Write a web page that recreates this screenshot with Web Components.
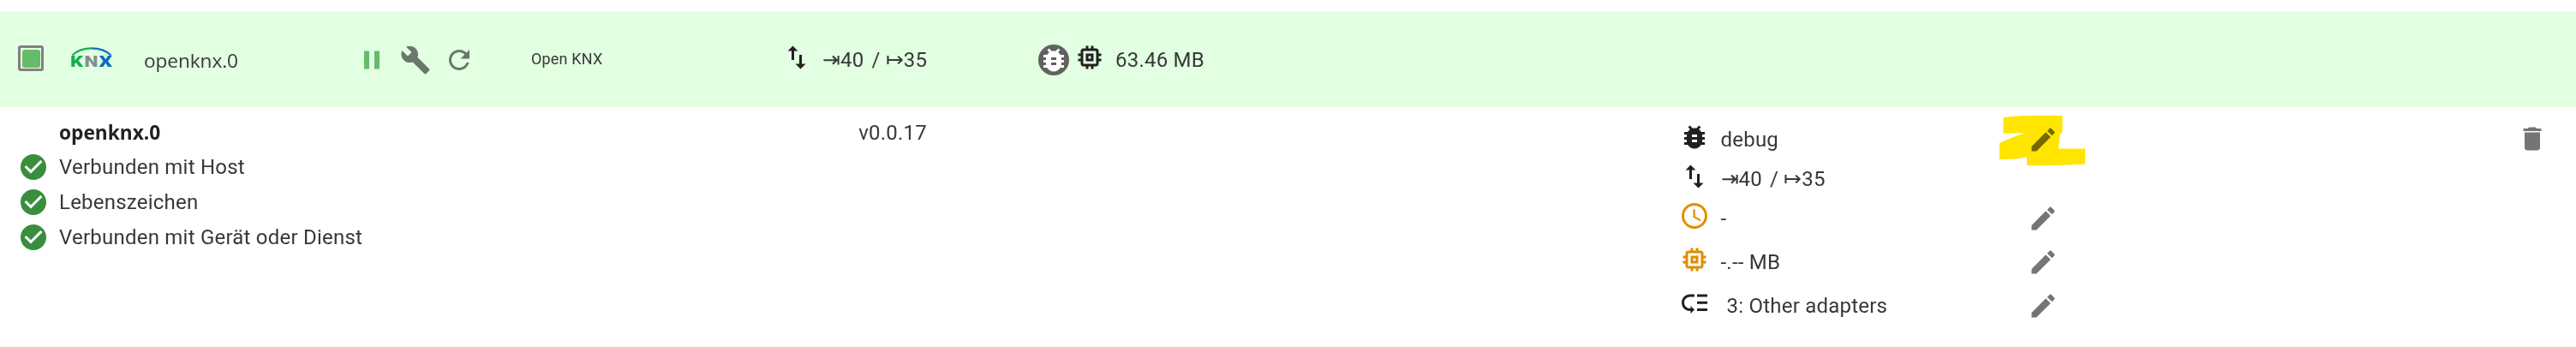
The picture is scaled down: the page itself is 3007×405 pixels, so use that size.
<!DOCTYPE html>
<html lang="de"><head><meta charset="utf-8"><title>openknx.0</title>
<style>html,body{margin:0;background:#fff}</style></head><body>
<instance-card></instance-card>
<script>
const ICONS={
pause:'M6 19h4V5H6v14zm8-14v14h4V5h-4z',
build:'M22.7 19l-9.1-9.1c.9-2.3.4-5-1.5-6.9-2-2-5-2.4-7.4-1.3L9 6 6 9 1.6 4.7C.4 7.1.9 10.1 2.9 12.1c1.9 1.9 4.6 2.4 6.9 1.5l9.1 9.1c.4.4 1 .4 1.4 0l2.3-2.3c.5-.4.5-1.1.1-1.4z',
refresh:'M17.65 6.35C16.2 4.9 14.21 4 12 4c-4.42 0-7.99 3.58-7.99 8s3.57 8 7.99 8c3.73 0 6.84-2.55 7.73-6h-2.08c-.82 2.33-3.04 4-5.65 4-3.31 0-6-2.69-6-6s2.69-6 6-6c1.66 0 3.14.69 4.22 1.78L13 11h7V4l-2.35 2.35z',
traffic:'M9 3L5 6.99h3V14h2V6.99h3L9 3zm7 14.01V10h-2v7.01h-3L15 21l4-3.99h-3z',
bug:'M20 8h-2.81c-.45-.78-1.07-1.45-1.82-1.96L17 4.41 15.59 3l-2.17 2.17C12.96 5.06 12.49 5 12 5c-.49 0-.96.06-1.41.17L8.41 3 7 4.41l1.62 1.63C7.88 6.55 7.26 7.22 6.81 8H4v2h2.09c-.05.33-.09.66-.09 1v1H4v2h2v1c0 .34.04.67.09 1H4v2h2.81c1.04 1.79 2.97 3 5.19 3s4.15-1.21 5.19-3H20v-2h-2.09c.05-.33.09-.66.09-1v-1h2v-2h-2v-1c0-.34-.04-.67-.09-1H20V8zm-6 8h-4v-2h4v2zm0-4h-4v-2h4v2z',
memory:'M15 9H9v6h6V9zm-2 4h-2v-2h2v2zm8-2V9h-2V7c0-1.1-.9-2-2-2h-2V3h-2v2h-2V3H9v2H7c-1.1 0-2 .9-2 2v2H3v2h2v2H3v2h2v2c0 1.1.9 2 2 2h2v2h2v-2h2v2h2v-2h2c1.1 0 2-.9 2-2v-2h2v-2h-2v-2h2zm-4 6H7V7h10v10z',
schedule:'M11.99 2C6.47 2 2 6.48 2 12s4.47 10 9.99 10C17.52 22 22 17.52 22 12S17.52 2 11.99 2zM12 20c-4.42 0-8-3.58-8-8s3.58-8 8-8 8 3.58 8 8-3.58 8-8 8zM12.5 7H11v6l5.25 3.15.75-1.23-4.5-2.67z',
priority:'M14 5h8v2h-8zm0 5.5h8v2h-8zm0 5.5h8v2h-8zM2 11.5C2 15.08 4.92 18 8.5 18H9v2l3-3-3-3v2h-.5C6.02 16 4 13.98 4 11.5S6.02 7 8.5 7H12V5H8.5C4.92 5 2 7.92 2 11.5z',
edit:'M3 17.25V21h3.75L17.81 9.94l-3.75-3.75L3 17.25zM20.71 7.04c.39-.39.39-1.02 0-1.41l-2.34-2.34c-.39-.39-1.02-.39-1.41 0l-1.83 1.83 3.75 3.75 1.83-1.83z',
delete:'M6 19c0 1.1.9 2 2 2h8c1.1 0 2-.9 2-2V7H6v12zM19 4h-3.5l-1-1h-5l-1 1H5v2h14V4z',
check:'M12 2C6.48 2 2 6.48 2 12s4.48 10 10 10 10-4.48 10-10S17.52 2 12 2zm-2 15l-5-5 1.41-1.41L10 14.17l7.59-7.59L19 8l-9 9z'};
function define(name,html){customElements.define(name,class extends HTMLElement{
 constructor(){super();const t=document.createElement('template');t.innerHTML=html;
 this.attachShadow({mode:'open'}).append(t.content.cloneNode(true));}})}

customElements.define('md-icon',class extends HTMLElement{connectedCallback(){
 if(this.shadowRoot)return;
 this.attachShadow({mode:'open'}).innerHTML=`<style>:host{display:block;flex:none;width:36px;height:36px}svg{display:block;fill:currentColor}</style><svg width="36" height="36" viewBox="0 0 24 24"><path d="${ICONS[this.getAttribute('name')]}"/></svg>`;}});

define('knx-logo',`<style>:host{display:block;flex:none;width:48px;height:25px}svg{display:block;margin:-4px}text{font:900 17.5px Roboto,"Liberation Sans",sans-serif;letter-spacing:0}</style>
<svg width="56" height="36" viewBox="-4 -4 56 36"><g fill="none" stroke-width="2.2"><path d="M1.5 9.5Q10 1.4 24 1.4" stroke="#12b14b"/><path d="M24 1.4Q38 1.4 46.5 9.5" stroke="#0b70bd"/></g>
<text x="-1" y="23.3" fill="#12b14b" textLength="15" lengthAdjust="spacingAndGlyphs">K</text><text x="15.6" y="23.3" fill="#80918d" textLength="16" lengthAdjust="spacingAndGlyphs">N</text><text x="32.5" y="23.3" fill="#0b70bd" textLength="15.5" lengthAdjust="spacingAndGlyphs">X</text></svg>`);

define('status-box',`<style>:host{display:block;flex:none;box-sizing:border-box;width:30px;height:30px;border:3px solid #808080;border-radius:3px;padding:1.5px}i{display:block;width:21px;height:21px;border-radius:3px;background:#66bb6a}</style><i></i>`);

define('bug-badge',`<style>:host{display:block;flex:none;width:36px;height:36px;border-radius:50%;background:#616161;color:#fff}</style><md-icon name="bug"></md-icon>`);

define('message-count',`<style>:host{display:flex;align-items:baseline;white-space:pre}
i{font:normal 200 25px/22px "DejaVu Sans",sans-serif;letter-spacing:0;width:21px;height:22px}
i+span{margin-right:6px;word-spacing:3px}b{font-weight:inherit}</style><i>⇥</i><span>40 /</span><i>↦</i><b>35</b>`);

define('status-line',`<style>:host{display:flex;align-items:center;height:41px}md-icon{color:#388e3c;margin:0 12px 0 21px}</style><md-icon name="check"></md-icon><slot></slot>`);

define('setting-row',`<style>:host{display:flex;align-items:flex-start;height:var(--h,51px)}
.icon{width:48.5px;color:var(--tone,#212121)}.text{flex:1;padding-top:3px;line-height:36px;white-space:pre}
.edit{margin-top:3px;color:#757575;width:36px}</style>
<div class="icon"><slot name="icon"></slot></div><div class="text"><slot></slot></div><div class="edit"><slot name="edit"></slot></div>`);

define('marker-stroke',`<style>:host{position:absolute;left:-34px;top:-12px;mix-blend-mode:multiply;pointer-events:none}svg{display:block}</style>
<svg width="102" height="62" viewBox="0 0 102 62"><path fill="#ffe500" d="M5.5 4Q30 1 74.5 2V21L71.500 24.500 70 40.500H101V58.500Q65 61 33 60V50.500Q17 53.500 1 53V34Q17 26 31 22.500H5.500Z"/></svg>`);

define('instance-summary',`<style>:host{display:flex;height:111px;background:#e2ffe2;box-shadow:0 -1px 2px #0000000a}
:host>*{flex:none}.c{padding-top:38px;display:flex;line-height:36px;box-sizing:border-box}
.box{width:83px;padding:39px 0 0 21px}.logo{width:85px;padding-top:41px}
.name{width:248px;font:400 22.7px/36px "Open Sans","Noto Sans",sans-serif;letter-spacing:-.1px;padding-top:39px}
.act{width:204px;gap:15px;color:#6b776b}.act :first-child{color:#66bb6a}
.title{width:292px;font-size:18px;letter-spacing:.17px;padding-top:38px;line-height:34px}
.msg{width:300px}md-icon[name=traffic],md-icon[name=memory]{color:#212121}.msg md-icon,.mem md-icon{margin-top:-3px}.msg message-count{margin-left:12px}
.mem md-icon{margin-left:6px;margin-right:12px}</style>
<div class="c box"><status-box></status-box></div><div class="c logo"><knx-logo></knx-logo></div>
<div class="c name">openknx.0</div>
<div class="c act"><md-icon name="pause"></md-icon><md-icon name="build"></md-icon><md-icon name="refresh"></md-icon></div>
<div class="c title">Open KNX</div>
<div class="c msg"><md-icon name="traffic"></md-icon><message-count></message-count></div>
<div class="c mem"><bug-badge></bug-badge><md-icon name="memory"></md-icon><span>63.46 MB</span></div>`);

define('instance-details',`<style>:host{display:grid;grid-template-columns:800px 282px 878px 443px 535px 36px;}
.left{padding-top:10px}h3{margin:0 0 0 69px;height:39px;color:#212121;font:700 22.7px/40px "Open Sans","Noto Sans",sans-serif;letter-spacing:0}
.ver{text-align:right;padding-top:14px;line-height:33px}.set{grid-column:4;padding-top:17px}
.hl{position:relative;display:block}.del{grid-column:6;padding-top:19px;color:#757575}</style>
<div class="left"><h3>openknx.0</h3><status-line>Verbunden mit Host</status-line><status-line>Lebenszeichen</status-line><status-line>Verbunden mit Gerät oder Dienst</status-line></div>
<div class="ver">v0.0.17</div>
<div class="set">
<setting-row style="--h:46px"><md-icon slot="icon" name="bug"></md-icon>debug<span slot="edit" class="hl"><md-icon name="edit"></md-icon><marker-stroke></marker-stroke></span></setting-row>
<setting-row style="--h:46px"><md-icon slot="icon" name="traffic"></md-icon><message-count></message-count></setting-row>
<setting-row style="--tone:#e08e00"><md-icon slot="icon" name="schedule"></md-icon>-<md-icon slot="edit" name="edit"></md-icon></setting-row>
<setting-row style="--tone:#e08e00"><md-icon slot="icon" name="memory"></md-icon>-.-- MB<md-icon slot="edit" name="edit"></md-icon></setting-row>
<setting-row><md-icon slot="icon" name="priority"></md-icon><span style="margin-left:7px">3: Other adapters</span><md-icon slot="edit" name="edit"></md-icon></setting-row>
</div>
<div class="del"><md-icon name="delete"></md-icon></div>`);

define('instance-card',`<style>:host{display:block;height:405px;box-sizing:border-box;padding-top:14px;overflow:hidden;background:#fff;color:#383838;font:400 24px/36px Roboto,"Liberation Sans",sans-serif;letter-spacing:.225px}</style><instance-summary></instance-summary><instance-details></instance-details>`);
</script></body></html>
